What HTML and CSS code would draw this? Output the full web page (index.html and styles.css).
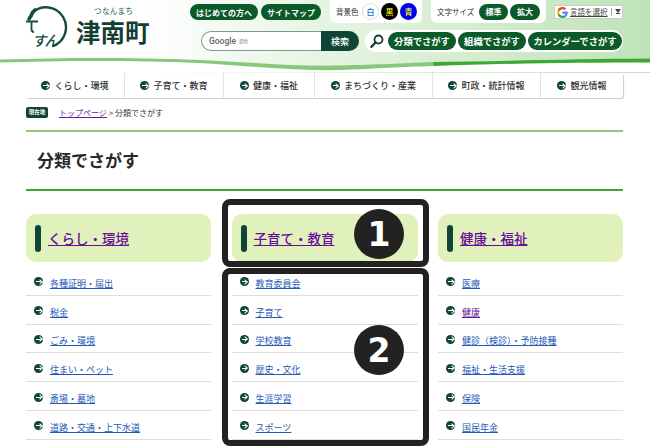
FILE: index.html
```html
<!DOCTYPE html>
<html lang="ja">
<head>
<meta charset="utf-8">
<title>分類でさがす | 津南町</title>
<link rel="stylesheet" href="styles.css">
</head>
<body>
<div class="page">
  <header class="header">
    <svg class="wave" viewBox="0 0 650 72" width="650" height="72" aria-hidden="true">
      <path d="M0 72V61C60 60 120 57 200 62C250 65 290 69 340 68C380 67 420 64 650 60V72Z" fill="#fff"/>
      <path d="M0 59.500C60 58 120 57 200 60C250 62 290 66.500 340 65.500C380 64.500 400 63.500 434 62V66C400 67 380 68.500 340 70C290 71 250 66 200 63C120 60 60 61 0 62.500Z" fill="#86c97a"/>
      <path d="M433 62C500 61 580 59 650 58.500V62.500C580 62.500 500 63.500 434 66Z" fill="#3ea832"/>
    </svg>
    <a class="logo" href="#">
      <svg class="mark" viewBox="0 0 42 44" width="42" height="44" aria-hidden="true">
        <path d="M6.500 6.500A20 20 0 1 1 27 40" fill="none" stroke="#14513c" stroke-width="2.400" stroke-linecap="round"/>
        <path d="M9 4C6 6 6 8 5 10C4 11 3.500 12 3 13" fill="none" stroke="#14513c" stroke-width="3.600" stroke-linecap="round"/>
        <path d="M0 15.500H12M5.500 15.500V23C5.500 25 6.500 26 8 26" fill="none" stroke="#14513c" stroke-width="1.800"/>
        <text class="mark-text" x="6" y="40">すん</text>
      </svg>
      <span class="logo-name">
        <small class="logo-kana">つなんまち</small>
        <strong class="logo-kanji">津南町</strong>
      </span>
    </a>
    <div class="tools">
      <div class="tools-top">
        <div class="pills">
          <a class="pill pill-small" href="#">はじめての方へ</a>
          <a class="pill pill-small" href="#">サイトマップ</a>
        </div>
        <div class="panel panel-color">
          <span class="panel-label">背景色</span>
          <span class="dot dot-white">白</span>
          <span class="dot dot-black">黒</span>
          <span class="dot dot-blue">青</span>
        </div>
        <div class="panel panel-size">
          <span class="panel-label">文字サイズ</span>
          <a class="pill pill-size" href="#">標準</a>
          <a class="pill pill-size" href="#">拡大</a>
        </div>
        <div class="translate">
          <svg viewBox="0 0 48 48" width="11" height="11" aria-hidden="true">
            <path fill="#ea4335" d="M24 9.500c3.500 0 6.700 1.300 9.200 3.600l6.900-6.900C35.900 2.400 30.400 0 24 0 14.600 0 6.500 5.400 2.600 13.200l8 6.200C12.500 13.700 17.800 9.500 24 9.500z"/>
            <path fill="#4285f4" d="M47 24.500c0-1.600-.1-3.100-.4-4.500H24v9h13c-.6 3-2.300 5.500-4.800 7.200l7.700 6C44.400 37.800 47 31.700 47 24.500z"/>
            <path fill="#fbbc05" d="M10.500 28.600c-.5-1.400-.8-3-.8-4.600s.3-3.200.8-4.600l-8-6.200C.9 16.500 0 20.100 0 24s.9 7.500 2.600 10.800z"/>
            <path fill="#34a853" d="M24 48c6.500 0 11.900-2.100 15.900-5.800l-7.700-6c-2.200 1.500-4.900 2.300-8.200 2.300-6.200 0-11.500-4.200-13.400-9.900l-8 6.200C6.500 42.600 14.600 48 24 48z"/>
          </svg>
          <span class="translate-text">言語を選択</span>
          <span class="translate-arrow"></span>
        </div>
      </div>
      <div class="tools-bottom">
        <form class="search">
          <div class="search-field"><span class="google">Google</span><span class="google-sub">提供</span></div>
          <span class="search-button">検索</span>
        </form>
        <div class="finder">
          <svg class="finder-icon" viewBox="0 0 14 14" width="14" height="14" aria-hidden="true">
            <circle cx="8.500" cy="5.500" r="4" fill="none" stroke="#123f30" stroke-width="1.800"/>
            <path d="M5.500 8.500L1.500 12.800" stroke="#123f30" stroke-width="2.400" stroke-linecap="round"/>
          </svg>
          <a class="pill pill-find pill-a" href="#">分類でさがす</a>
          <a class="pill pill-find pill-a" href="#">組織でさがす</a>
          <a class="pill pill-find pill-b" href="#">カレンダーでさがす</a>
        </div>
      </div>
    </div>
  </header>

  <nav class="gnav">
    <a href="#"><i class="arrow"></i>くらし・環境</a>
    <a href="#"><i class="arrow"></i>子育て・教育</a>
    <a href="#"><i class="arrow"></i>健康・福祉</a>
    <a href="#"><i class="arrow"></i>まちづくり・産業</a>
    <a href="#"><i class="arrow"></i>町政・統計情報</a>
    <a href="#"><i class="arrow"></i>観光情報</a>
  </nav>

  <div class="crumbs">
    <span class="crumb-badge">現在地</span>
    <a class="crumb-link" href="#">トップページ</a>
    <span class="crumb-rest">&gt; 分類でさがす</span>
  </div>

  <main class="main">
    <h1 class="title">分類でさがす</h1>
    <div class="columns">
      <section class="col">
        <h2 class="cat"><a class="cat-link" href="#">くらし・環境</a></h2>
        <ul class="list">
          <li><i class="arrow"></i><a href="#">各種証明・届出</a></li>
          <li><i class="arrow"></i><a href="#">税金</a></li>
          <li><i class="arrow"></i><a href="#">ごみ・環境</a></li>
          <li><i class="arrow"></i><a href="#">住まい・ペット</a></li>
          <li><i class="arrow"></i><a href="#">斎場・墓地</a></li>
          <li><i class="arrow"></i><a href="#">道路・交通・上下水道</a></li>
        </ul>
      </section>
      <section class="col">
        <h2 class="cat"><a class="cat-link" href="#">子育て・教育</a></h2>
        <ul class="list">
          <li><i class="arrow"></i><a href="#">教育委員会</a></li>
          <li><i class="arrow"></i><a href="#">子育て</a></li>
          <li><i class="arrow"></i><a href="#">学校教育</a></li>
          <li><i class="arrow"></i><a href="#">歴史・文化</a></li>
          <li><i class="arrow"></i><a href="#">生涯学習</a></li>
          <li><i class="arrow"></i><a href="#">スポーツ</a></li>
        </ul>
      </section>
      <section class="col">
        <h2 class="cat"><a class="cat-link" href="#">健康・福祉</a></h2>
        <ul class="list">
          <li><i class="arrow"></i><a href="#">医療</a></li>
          <li><i class="arrow"></i><a class="visited" href="#">健康</a></li>
          <li><i class="arrow"></i><a href="#">健診（検診）・予防接種</a></li>
          <li><i class="arrow"></i><a href="#">福祉・生活支援</a></li>
          <li><i class="arrow"></i><a href="#">保険</a></li>
          <li><i class="arrow"></i><a href="#">国民年金</a></li>
        </ul>
      </section>
    </div>
  </main>

  <div class="callout callout-one"></div>
  <div class="callout callout-two"></div>
  <span class="num num-one">1</span>
  <span class="num num-two">2</span>
</div>
</body>
</html>
```
FILE: styles.css
```css
* { box-sizing: border-box; }
html, body { margin: 0; padding: 0; background: #fff; }
body { font-family: "Noto Sans CJK JP", "Noto Sans", sans-serif; color: #222; }
a { text-decoration: none; color: inherit; }
ul, h1, h2 { margin: 0; padding: 0; }
.page { position: relative; width: 650px; height: 447px; overflow: hidden; }

/* header */
.header { position: relative; display: flex; height: 73px; padding-left: 26px; background: linear-gradient(90deg, #fff 0, #fff 22%, #e6f4e2 50%, #bfe3b9 100%); }
.wave { position: absolute; left: 0; top: 0; }
.logo { position: relative; display: flex; width: 164px; padding-top: 6px; }
.mark { flex: none; }
.mark-text { font-size: 14.500px; font-weight: 500; fill: #14513c; font-style: italic; letter-spacing: -2px; }
.logo-name { display: flex; flex-direction: column; align-items: center; margin-left: 8px; }
.logo-kana { font-size: 7.500px; line-height: 10px; color: #2b5a4b; letter-spacing: .4px; margin-left: 2px; }
.logo-kanji { font-size: 24.500px; line-height: 24px; margin-top: 4px; color: #123f30; font-weight: 700; }
.tools { position: relative; width: 433px; }
.tools-top { display: flex; height: 30px; align-items: flex-start; }
.pills { display: flex; gap: 3px; width: 140px; padding-top: 4px; }
.pill { display: flex; align-items: center; justify-content: center; color: #fff; background: #0b5a2a; border-radius: 10px; font-weight: 700; }
.pill-small { height: 16px; font-size: 8px; width: 68px; }
.pill-small + .pill-small { width: 60px; }
.panel { display: flex; align-items: center; height: 23px; background: #fff; border-radius: 0 0 6px 6px; padding-left: 6px; }
.panel-label { font-size: 7.500px; color: #333; }
.panel-color { width: 92px; gap: 2px; }
.panel-color .panel-label { width: 24px; }
.dot { display: flex; align-items: center; justify-content: center; width: 17px; height: 17px; border-radius: 50%; font-size: 8px; font-weight: 500; }
.dot-white { background: #fff; color: #1e6fc4; border: 1px solid #ddd; }
.dot-black { background: #000; color: #ff0; }
.dot-blue { background: #0000f0; color: #ff0; }
.panel-size { width: 115px; margin-left: 9px; gap: 2px; }
.panel-size .panel-label { width: 40px; white-space: nowrap; }
.pill-size { width: 29px; height: 16px; font-size: 8px; }
.pill-size + .pill-size { width: 30px; }
.translate { display: flex; align-items: center; width: 69px; height: 14px; margin: 5px 0 0 8px; padding-left: 2px; background: #fff; border: 1px solid #ccc; }
.translate-text { font-size: 7.500px; line-height: 10px; color: #444; text-decoration: underline; margin-left: 2px; width: 40px; white-space: nowrap; }
.translate-arrow { height: 8px; width: 11px; border-left: 1px solid #aaa; margin-left: 1px; position: relative; }
.translate-arrow::after { content: ""; position: absolute; left: 3px; top: 1px; border: 3px solid transparent; border-top: 4px solid #444; border-bottom: 0; box-shadow: 0 2px 0 -1px #444; }

.tools-bottom { display: flex; align-items: center; height: 24px; margin-top: -1px; padding-left: 11px; }
.search { display: flex; width: 158px; height: 20px; margin: 0; }
.search-field { display: flex; align-items: center; gap: 3px; width: 120px; background: #fff; border: 1px solid #7c9a8f; border-right: 0; border-radius: 10px 0 0 10px; padding-left: 7px; }
.google { font: 500 8.500px "Roboto", sans-serif; color: #666; }
.google-sub { font-size: 4.500px; color: #777; }
.search-button { display: flex; align-items: center; justify-content: center; width: 38px; background: #0f4534; color: #fff; font-size: 9px; font-weight: 500; border-radius: 0 10px 10px 0; }
.finder { display: flex; align-items: center; gap: 2px; width: 258px; height: 22px; margin-left: 6px; padding-left: 5px; background: #fff; border-radius: 11px; }
.finder-icon { margin-right: 2px; }
.pill-find { height: 18px; font-size: 9.300px; border-radius: 9px; white-space: nowrap; }
.pill-a { width: 68px; }
.pill-b { width: 94px; }

/* global nav */
.gnav { display: grid; grid-template-columns: 99px 99px 91px 118px 108px 82px; height: 25px; margin: 0 27px 0 26px; background: #fff; border-radius: 2px; box-shadow: 1px 1px 1px #ccc; }
.gnav a { display: flex; align-items: center; justify-content: center; gap: 4px; font-size: 9px; color: #333; font-weight: 500; border-right: 1px solid #e4e4e4; white-space: nowrap; }
.gnav a:last-child { border-right: 0; }
.arrow { position: relative; flex: none; display: block; width: 9px; height: 9px; border-radius: 50%; background: #0f4534; }
.arrow::before { content: ""; position: absolute; left: 2px; top: 4px; width: 5px; height: 1px; background: #fff; }
.arrow::after { content: ""; position: absolute; left: 3.500px; top: 2.500px; width: 3px; height: 3px; border-top: 1px solid #fff; border-right: 1px solid #fff; transform: rotate(45deg); }

/* breadcrumbs */
.crumbs { display: flex; align-items: center; height: 33px; padding: 0 0 5px 26px; font-size: 8px; }
.crumb-badge { display: flex; align-items: center; justify-content: center; width: 22px; height: 11px; background: #0f4534; color: #fff; font-size: 5.500px; font-weight: 700; border-radius: 2px; margin-right: 11px; }
.crumb-link { color: #6a1b9a; text-decoration: underline; margin-right: 2px; }
.crumb-rest { color: #333; }

/* main */
.main { margin: 0 27px 0 26px; }
.title { height: 61px; padding: 15px 0 0 11px; border-top: 2px solid #8ecb7e; border-bottom: 2px solid #3ea832; font-size: 17px; line-height: 26px; font-weight: 700; color: #2a2a2a; margin-top: -1px; }
.columns { display: grid; grid-template-columns: 185px 186px 185px; column-gap: 20.500px; margin-top: 23px; }
.cat { display: flex; align-items: center; height: 48px; padding-left: 9px; background: #e0f1bb; border-radius: 10px; }
.cat::before { content: ""; width: 6px; height: 27px; margin-right: 7px; background: #0f4534; border-radius: 3px; }
.cat-link { color: #6a0d9a; font-size: 13.500px; font-weight: 500; text-decoration: underline; }
.list { list-style: none; margin-top: 5px; }
.list li { display: flex; align-items: center; gap: 7px; height: 28.800px; padding: 5px 0 0 8px; border-bottom: 1px solid #ddd; }
.list .arrow { margin-top: -3px; }
.list a { font-size: 9px; color: #2559b5; text-decoration: underline; }
.list a.visited { color: #6a0d9a; }

/* overlay callouts */
.callout { position: absolute; left: 222px; width: 207px; border: 6px solid #222; border-radius: 8px; }
.callout-one { top: 199px; height: 68px; }
.callout-two { top: 268px; height: 178px; }
.num { position: absolute; left: 354px; display: flex; align-items: center; justify-content: center; width: 50px; height: 50px; border-radius: 50%; background: #222; color: #fff; font-family: "DejaVu Sans", sans-serif; font-weight: 700; font-size: 33px; }
.num-one { top: 209px; }
.num-two { top: 325px; }
```
